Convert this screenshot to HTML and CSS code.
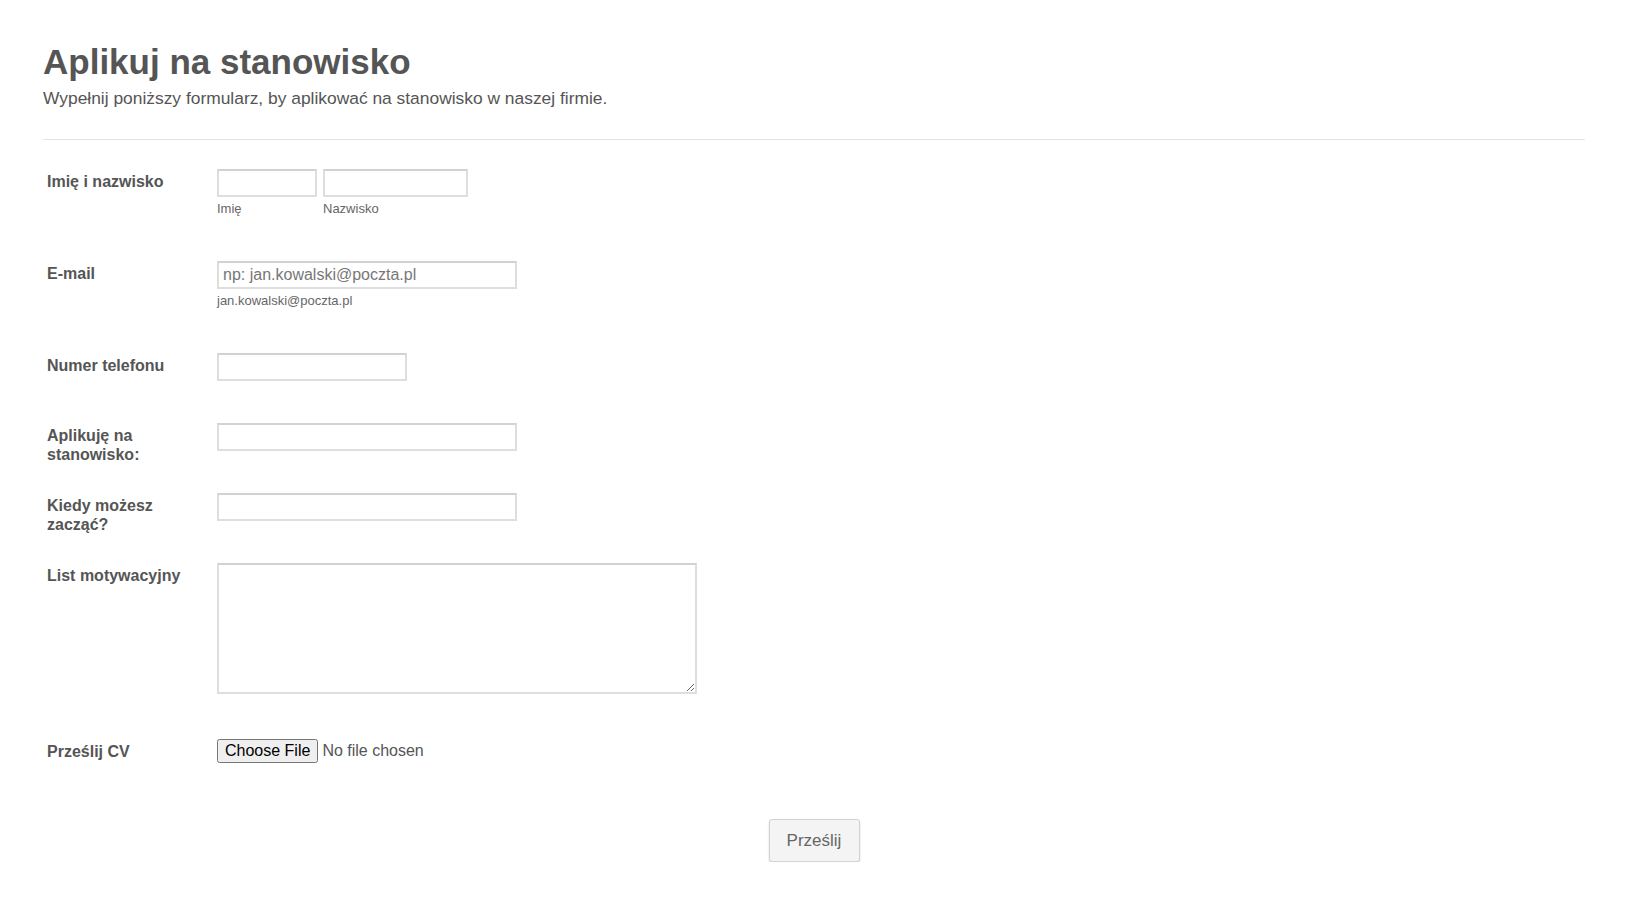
FILE: index.html
```html
<!DOCTYPE html>
<html lang="pl">
<head>
<meta charset="utf-8">
<title>Aplikuj na stanowisko</title>
<link rel="stylesheet" href="styles.css">
</head>
<body>
<div class="page">
  <header class="header">
    <h1 class="title">Aplikuj na stanowisko</h1>
    <p class="subtitle">Wypełnij poniższy formularz, by aplikować na stanowisko w naszej firmie.</p>
  </header>
  <form class="form">
    <div class="row">
      <label class="label">Imię i nazwisko</label>
      <div class="field">
        <div class="name-group">
          <div class="sub">
            <input class="input w-first" type="text">
            <span class="sublabel">Imię</span>
          </div>
          <div class="sub">
            <input class="input w-last" type="text">
            <span class="sublabel">Nazwisko</span>
          </div>
        </div>
      </div>
    </div>
    <div class="row">
      <label class="label">E-mail</label>
      <div class="field">
        <input class="input w-wide" type="text" placeholder="np: jan.kowalski@poczta.pl">
        <span class="sublabel">jan.kowalski@poczta.pl</span>
      </div>
    </div>
    <div class="row">
      <label class="label">Numer telefonu</label>
      <div class="field">
        <input class="input w-phone" type="text">
      </div>
    </div>
    <div class="row">
      <label class="label">Aplikuję na stanowisko:</label>
      <div class="field">
        <input class="input w-wide" type="text">
      </div>
    </div>
    <div class="row">
      <label class="label">Kiedy możesz zacząć?</label>
      <div class="field">
        <input class="input w-wide" type="text">
      </div>
    </div>
    <div class="row">
      <label class="label">List motywacyjny</label>
      <div class="field">
        <textarea class="textarea"></textarea>
      </div>
    </div>
    <div class="row">
      <label class="label">Prześlij CV</label>
      <div class="field">
        <input class="file" type="file">
      </div>
    </div>
    <div class="actions">
      <button class="submit" type="button">Prześlij</button>
    </div>
  </form>
</div>
</body>
</html>
```

FILE: styles.css
```css
html, body {
  margin: 0;
  padding: 0;
  background: #fff;
}
body {
  font-family: "Liberation Sans", Arial, sans-serif;
  color: #555;
}
.page {
  padding: 42px 43px 0 43px;
}
.header {
  border-bottom: 1px solid #e3e3e3;
  padding-bottom: 30px;
}
.title {
  margin: 0;
  font-size: 35px;
  line-height: 40px;
  font-weight: bold;
  color: #555;
}
.subtitle {
  margin: 6px 0 0 0;
  font-size: 17.4px;
  line-height: 21px;
  color: #555;
}
.form {
  padding-top: 8px;
}
.row {
  display: flex;
  align-items: flex-start;
  padding: 21px 4px 0 4px;
}
.label {
  flex: 0 0 170px;
  width: 170px;
  box-sizing: border-box;
  padding: 3px 20px 0 0;
  font-size: 16px;
  line-height: 19px;
  font-weight: bold;
  color: #555;
}
.field {
  display: flex;
  flex-direction: column;
  align-items: flex-start;
  padding-bottom: 21px;
}
.name-group {
  display: flex;
  gap: 6px;
}
.sub {
  display: flex;
  flex-direction: column;
}
.input {
  box-sizing: border-box;
  height: 28px;
  border: 2px solid #dedede;
  border-top-color: #d2d2d2;
  border-radius: 0;
  padding: 0 4px;
  font-family: "Liberation Sans", Arial, sans-serif;
  font-size: 16px;
  color: #555;
  background: #fff;
  outline: none;
}
.input::placeholder {
  color: #777;
}
.w-first { width: 100px; }
.w-last { width: 145px; }
.w-wide { width: 300px; }
.w-phone { width: 190px; }
.sublabel {
  display: block;
  margin-top: 4px;
  font-size: 13px;
  line-height: 15px;
  color: #666;
  padding-bottom: 3px;
}
.textarea {
  box-sizing: border-box;
  width: 480px;
  height: 131px;
  border: 2px solid #dedede;
  border-top-color: #d2d2d2;
  padding: 4px;
  font-family: "Liberation Sans", Arial, sans-serif;
  font-size: 16px;
  color: #555;
  resize: both;
  outline: none;
  margin-bottom: 3px;
}
.file {
  font-family: "Liberation Sans", Arial, sans-serif;
  font-size: 16px;
  color: #555;
}
.actions {
  display: flex;
  justify-content: center;
  padding-top: 35px;
}
.submit {
  box-sizing: border-box;
  width: 91px;
  height: 43px;
  border: 1px solid #d3d3d3;
  border-radius: 3px;
  background: #f4f4f4;
  box-shadow: 0 1px 2px rgba(0, 0, 0, 0.18);
  font-family: "Liberation Sans", Arial, sans-serif;
  font-size: 17px;
  color: #666;
  cursor: pointer;
}
```
